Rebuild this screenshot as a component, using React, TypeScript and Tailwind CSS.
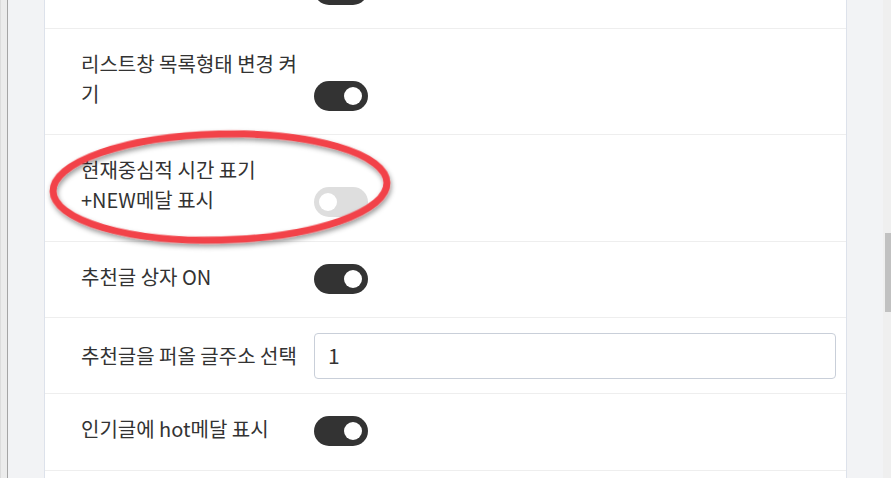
const Toggle = ({ on }: { on: boolean }) => (
  <div
    className={`flex h-[30px] w-[54px] shrink-0 items-center rounded-full ${
      on ? 'justify-end bg-[#333333] pr-[6px]' : 'justify-start bg-[#dedede] pl-[5px]'
    }`}
  >
    <div className="h-[18px] w-[18px] rounded-full bg-white" />
  </div>
)

const App = () => {
  return (
    <div
      className="relative flex h-[478px] w-[891px] overflow-hidden bg-[#f2f3f5] text-[#333333]"
      style={{ fontFamily: '"Noto Sans CJK KR", "Noto Sans", sans-serif' }}
    >
      {/* left edge */}
      <div className="w-[7px] border-l border-[#dcdcdc] bg-[#ececec]" />
      <div className="w-px bg-[#a5a5a5]" />
      <div className="w-[36px]" />

      {/* settings panel */}
      <div className="w-[803px] shrink-0 border-x border-[#dde2eb] bg-white">
        <div className="-mt-[47px]">
          {/* row scrolled out of view: only its toggle's lower edge shows */}
          <div className="flex items-end border-b border-[#eeeeee] pb-[23px] pl-[36px] pr-[10px] pt-[20px]">
            <div className="h-[32px] w-[225px]" />
            <div className="ml-[8px]">
              <Toggle on />
            </div>
          </div>

          <div className="flex items-end border-b border-[#eeeeee] pb-[23px] pl-[36px] pr-[10px] pt-[20px]">
            <div className="w-[225px] pb-[2px] text-[20px] leading-[30px]">리스트창 목록형태 변경 켜기</div>
            <div className="ml-[8px]">
              <Toggle on />
            </div>
          </div>

          <div className="flex items-end border-b border-[#eeeeee] pb-[24px] pl-[36px] pr-[10px] pt-[20px]">
            <div className="w-[225px] pb-[2px] text-[20px] leading-[30px]">
              현재중심적 시간 표기
              <br />
              +NEW메달 표시
            </div>
            <div className="ml-[8px]">
              <Toggle on={false} />
            </div>
          </div>

          <div className="flex items-end border-b border-[#eeeeee] pb-[23px] pl-[36px] pr-[10px] pt-[20px]">
            <div className="w-[225px] pb-[2px] text-[20px] leading-[30px]">추천글 상자 ON</div>
            <div className="ml-[8px]">
              <Toggle on />
            </div>
          </div>

          <div className="flex items-center border-b border-[#eeeeee] pb-[14px] pl-[36px] pr-[10px] pt-[15px]">
            <div className="w-[225px] text-[20px] leading-[30px]">추천글을 퍼올 글주소 선택</div>
            <div className="ml-[8px] flex h-[46px] flex-1 items-center rounded-[4px] border border-[#c9cfd9] pl-[13px] text-[21px]">
              1
            </div>
          </div>

          <div className="flex items-end border-b border-[#eeeeee] pb-[24px] pl-[36px] pr-[10px] pt-[20px]">
            <div className="w-[225px] pb-[2px] text-[20px] leading-[30px]">인기글에 hot메달 표시</div>
            <div className="ml-[8px]">
              <Toggle on />
            </div>
          </div>

          <div className="h-[80px]" />
        </div>
      </div>

      <div className="w-[36px]" />

      {/* scrollbar */}
      <div className="relative w-[8px] bg-[#efefef]">
        <div className="absolute left-[2px] right-0 top-[233px] h-[79px] bg-[#c1c1c1]" />
      </div>

      {/* red highlight ring */}
      <svg className="pointer-events-none absolute left-0 top-0" width="891" height="478" viewBox="0 0 891 478">
        <defs>
          <filter id="ringShadow" x="-20%" y="-40%" width="140%" height="180%">
            <feDropShadow dx="1" dy="3" stdDeviation="2.5" floodColor="#000" floodOpacity="0.4" />
          </filter>
        </defs>
        <ellipse
          cx="220"
          cy="187"
          rx="167"
          ry="53"
          fill="none"
          stroke="#f2434a"
          strokeWidth="7"
          transform="rotate(-1.5 220 187)"
          filter="url(#ringShadow)"
        />
      </svg>
    </div>
  )
}

export default App
